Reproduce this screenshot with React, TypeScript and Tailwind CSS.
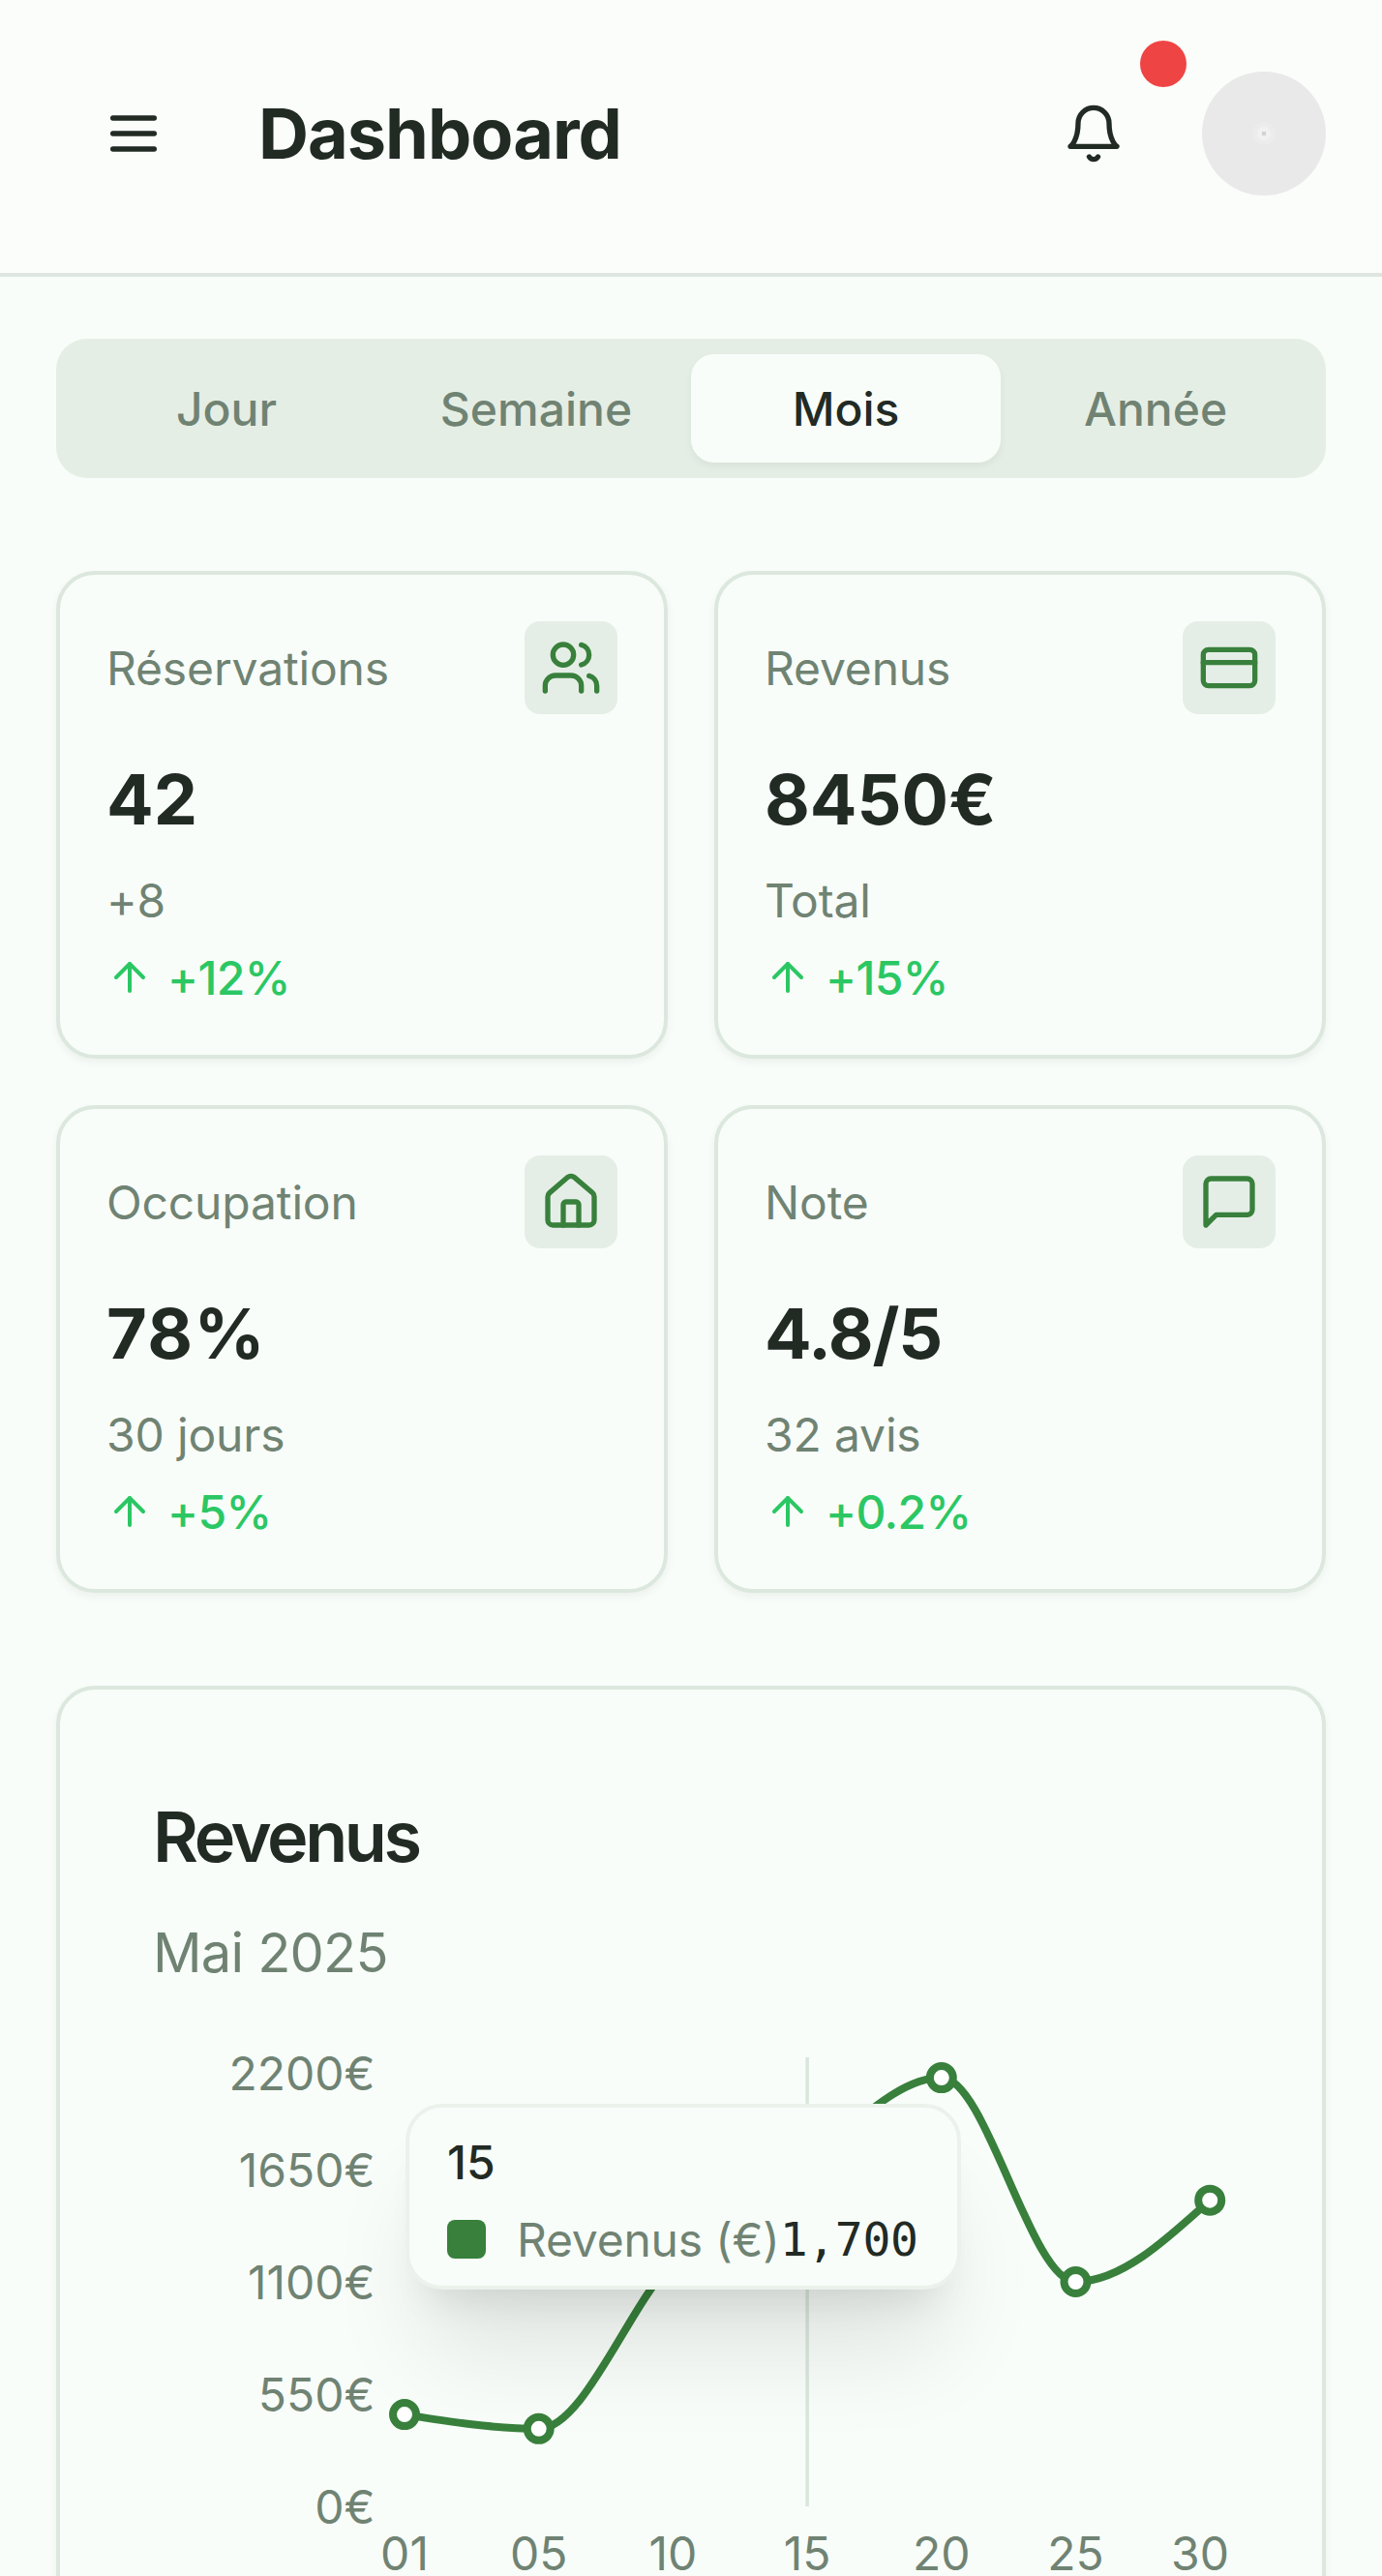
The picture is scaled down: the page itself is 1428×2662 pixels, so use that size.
import { useMemo } from "react"
import type { ReactNode } from "react"
import { ArrowUp } from "lucide-react"

interface StatCardProps {
  title: string
  value: string
  detail: string
  trend: string
  icon: ReactNode
  valueClass?: string
}

const periods = ["Jour", "Semaine", "Mois", "Année"]

const revenueData = [
  { day: "01", revenue: 450 },
  { day: "05", revenue: 380 },
  { day: "10", revenue: 1200 },
  { day: "15", revenue: 1700 },
  { day: "20", revenue: 2100 },
  { day: "25", revenue: 1100 },
  { day: "30", revenue: 1500 },
]

function Icon({ children, className }: { children: ReactNode; className?: string }) {
  return (
    <svg
      viewBox="0 0 24 24"
      fill="none"
      stroke="currentColor"
      strokeWidth={2}
      strokeLinecap="round"
      strokeLinejoin="round"
      className={className ?? "size-16"}
    >
      {children}
    </svg>
  )
}

const stats: StatCardProps[] = [
  {
    title: "Réservations",
    value: "42",
    detail: "+8",
    trend: "+12%",
    icon: (
      <Icon>
        <path d="M16 21v-2a4 4 0 0 0-4-4H6a4 4 0 0 0-4 4v2" />
        <circle cx="9" cy="7" r="4" />
        <path d="M22 21v-2a4 4 0 0 0-3-3.87" />
        <path d="M16 3.13a4 4 0 0 1 0 7.75" />
      </Icon>
    ),
  },
  {
    title: "Revenus",
    value: "8450€",
    detail: "Total",
    trend: "+15%",
    icon: (
      <Icon>
        <rect width="20" height="14" x="2" y="5" rx="2" />
        <path d="M2 10h20" />
      </Icon>
    ),
  },
  {
    title: "Occupation",
    value: "78%",
    detail: "30 jours",
    trend: "+5%",
    valueClass: "tracking-[1.4px]",
    icon: (
      <Icon>
        <path d="M15 21v-8a1 1 0 0 0-1-1h-4a1 1 0 0 0-1 1v8" />
        <path d="M3 10a2 2 0 0 1 .709-1.528l7-5.999a2 2 0 0 1 2.582 0l7 5.999A2 2 0 0 1 21 10v9a2 2 0 0 1-2 2H5a2 2 0 0 1-2-2z" />
      </Icon>
    ),
  },
  {
    title: "Note",
    value: "4.8/5",
    detail: "32 avis",
    trend: "+0.2%",
    valueClass: "tracking-[-1.2px]",
    icon: (
      <Icon>
        <path d="M21 15a2 2 0 0 1-2 2H7l-4 4V5a2 2 0 0 1 2-2h14a2 2 0 0 1 2 2z" />
      </Icon>
    ),
  },
]

function StatCard({ title, value, detail, trend, icon, valueClass = "" }: StatCardProps) {
  return (
    <div className="rounded-[40px] border-4 border-[#dce7de] bg-[#f8fdf9] p-12 shadow-[0_4px_8px_rgba(0,0,0,0.05)]">
      <div className="flex items-center justify-between">
        <span className="translate-y-px text-[48px] leading-[64px] tracking-[-0.15px] text-[#708373]">{title}</span>
        <div className="flex size-24 items-center justify-center rounded-2xl bg-[#e5eee6] text-[#38803c]">{icon}</div>
      </div>
      <div className={`mt-8 text-[72px] leading-[112px] font-bold text-[#222a24] ${valueClass}`}>{value}</div>
      <div className="mt-4 translate-y-px text-[48px] leading-[64px] tracking-[-0.15px] text-[#708373]">{detail}</div>
      <div className="mt-4 flex items-center gap-[15px] text-[48px] leading-[64px] font-medium tracking-[-0.6px] text-[#2bc764]">
        <ArrowUp className="size-12" />
        <span className="translate-y-px">{trend}</span>
      </div>
    </div>
  )
}

// Monotone cubic through the points, so the line never overshoots a value
function monotonePath(points: { x: number; y: number }[]) {
  const n = points.length
  const slopes = points.slice(1).map((p, i) => (p.y - points[i].y) / (p.x - points[i].x))
  const tangents = points.map((_, i) => {
    if (i === 0 || i === n - 1) return 0
    const a = slopes[i - 1]
    const b = slopes[i]
    if (a * b <= 0) return 0
    return Math.sign(a) * 2 * Math.min(Math.abs(a), Math.abs(b), Math.abs(a + b) / 4)
  })
  tangents[0] = (3 * slopes[0] - tangents[1]) / 2
  tangents[n - 1] = (3 * slopes[n - 2] - tangents[n - 2]) / 2

  let d = `M${points[0].x},${points[0].y}`
  for (let i = 1; i < n; i++) {
    const p = points[i - 1]
    const q = points[i]
    const dx = (q.x - p.x) / 3
    d += `C${p.x + dx},${p.y + dx * tangents[i - 1]},${q.x - dx},${q.y - dx * tangents[i]},${q.x},${q.y}`
  }
  return d
}

function RevenueChart() {
  const left = 260
  const step = 138.7
  const top = 68
  const bottom = 532
  const max = 2200

  const points = useMemo(
    () =>
      revenueData.map((d, i) => ({
        x: left + i * step,
        y: bottom - (d.revenue / max) * (bottom - top),
      })),
    [],
  )

  const yTicks = [
    { label: "2200€", y: 84 },
    { label: "1650€", y: 184 },
    { label: "1100€", y: 300 },
    { label: "550€", y: 416 },
    { label: "0€", y: 532 },
  ]

  return (
    <div className="relative h-[604px] w-full">
      <svg viewBox="0 0 1112 604" className="h-full w-full overflow-visible text-[48px]" fill="#708373">
        {yTicks.map((tick) => (
          <text key={tick.label} x={229.5} y={tick.y + 17.5} textAnchor="end">
            {tick.label}
          </text>
        ))}
        {revenueData.map((d, i) => (
          <text key={d.day} x={i === 6 ? 1082 : points[i].x} y={597.5} textAnchor="middle">
            {d.day}
          </text>
        ))}
        <path d={`M${points[3].x},${top}V${bottom}`} stroke="#d9e6dc" strokeWidth={3.5} />
        <path d={monotonePath(points)} fill="none" stroke="#38803c" strokeWidth={8} />
        {points.map((p) => (
          <circle key={p.x} cx={p.x} cy={p.y} r={12} fill="#fff" stroke="#38803c" strokeWidth={8} />
        ))}
      </svg>

      {/* Tooltip */}
      <div className="absolute top-[116px] left-[261px] flex w-[574px] flex-col gap-6 rounded-[38px] border-4 border-[#ebf2ec] bg-[#f8fdf9] pr-[41px] pl-[39px] py-6 text-[48px] shadow-[0_80px_100px_-20px_rgba(0,0,0,0.1),0_32px_40px_-24px_rgba(0,0,0,0.1)]">
        <div className="translate-y-px leading-[64px] font-medium text-[#222a24]">15</div>
        <div className="flex items-center leading-[48px]">
          <div className="mr-8 size-10 shrink-0 rounded-lg bg-[#38803c]" />
          <div className="flex flex-1 items-center justify-between whitespace-nowrap">
            <span className="translate-y-px tracking-[-0.2px] text-[#708373]">Revenus (€)</span>
            <span className="font-['DejaVu_Sans_Mono',monospace] tracking-[-0.3px] text-[#222a24]">1,700</span>
          </div>
        </div>
      </div>
    </div>
  )
}

export default function App() {
  return (
    <div className="h-[2662px] w-[1428px] overflow-hidden bg-[#f8fdf9] font-['Inter',sans-serif]">
      <header className="flex h-[286px] items-start border-b-4 border-[#dfe6df] bg-[#fbfdfa] px-[58px] pt-[58px] text-[#222a24]">
        <button className="flex size-40 items-center justify-center">
          <Icon>
            <path d="M4 6h16M4 12h16M4 18h16" />
          </Icon>
        </button>
        <h1 className="ml-[49px] text-[72px] leading-[160px] font-bold tracking-[-1px]">Dashboard</h1>
        <button className="relative ml-auto flex size-40 items-center justify-center">
          <Icon>
            <path d="M6 8a6 6 0 0 1 12 0c0 7 3 9 3 9H3s3-2 3-9" />
            <path d="M10.3 21a1.94 1.94 0 0 0 3.4 0" />
          </Icon>
          <span className="absolute -top-4 -right-4 size-12 rounded-full bg-[#ef4444]" />
        </button>
        <div className="mt-4 ml-8 flex size-32 items-center justify-center rounded-full bg-[#e9e9e9]">
          <div className="flex size-6 items-center justify-center rounded-full bg-[#ececec]">
            <div className="flex size-3.5 items-center justify-center rounded-full bg-[#f1f1f1]">
              <div className="size-1 bg-[#d2d2d2]" />
            </div>
          </div>
        </div>
      </header>

      <main className="flex flex-col gap-24 px-[58px] pt-16">
        <div className="grid h-36 grid-cols-4 rounded-[32px] bg-[#e5eee5] p-4 text-[48px] font-medium">
          {periods.map((period) =>
            period === "Mois" ? (
              <button
                key={period}
                className="rounded-3xl bg-[#f8fdf9] pt-0.5 text-[#222a24] shadow-[0_4px_8px_rgba(0,0,0,0.05)]"
              >
                {period}
              </button>
            ) : (
              <button key={period} className="pt-0.5 text-[#708373]">
                {period}
              </button>
            ),
          )}
        </div>

        <div className="grid grid-cols-2 gap-12">
          {stats.map((stat) => (
            <StatCard key={stat.title} {...stat} />
          ))}
        </div>

        <div className="rounded-[40px] border-4 border-[#dce7de] bg-[#f8fdf9] p-24 shadow-[0_4px_8px_rgba(0,0,0,0.05)]">
          <h2 className="text-[72px] leading-[112px] font-semibold tracking-[-3.4px] text-[#222a24]">Revenus</h2>
          <p className="mt-6 text-[56px] leading-[80px] tracking-[-0.8px] text-[#708373]">Mai 2025</p>
          <RevenueChart />
        </div>
      </main>
    </div>
  )
}
